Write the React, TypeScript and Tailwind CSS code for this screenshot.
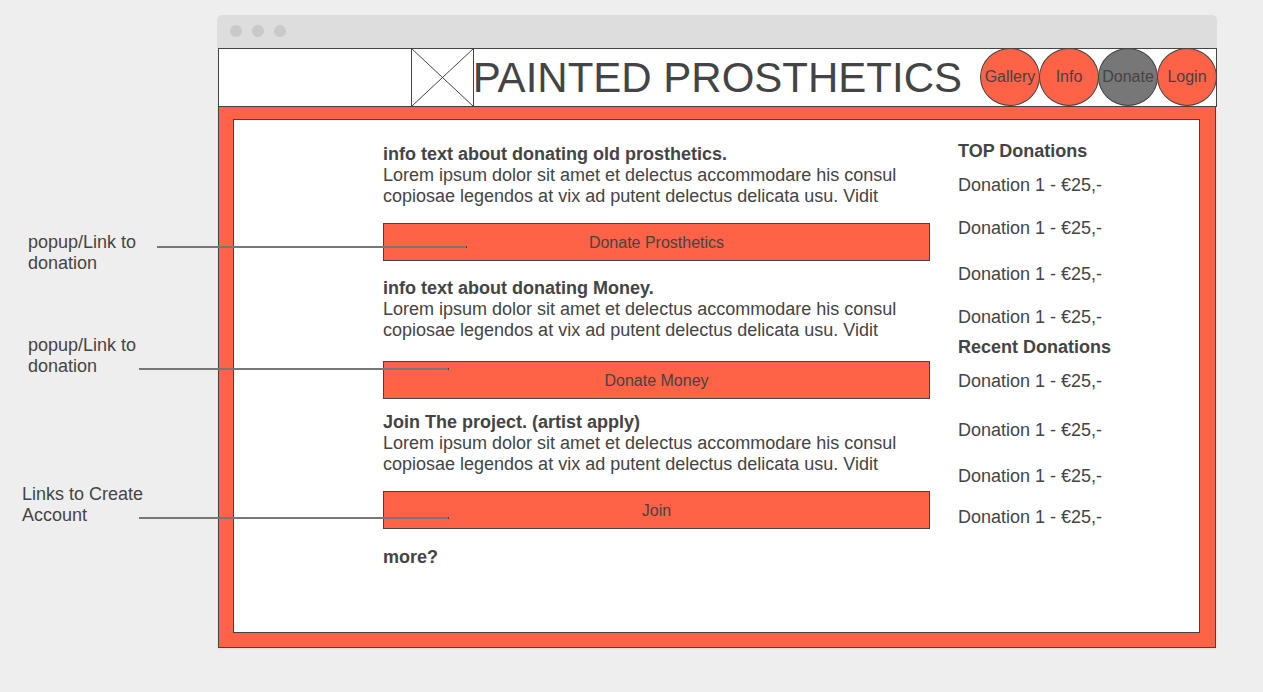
import React from "react";
import clsx from "clsx";

const LOREM =
  "Lorem ipsum dolor sit amet et delectus accommodare his consul copiosae legendos at vix ad putent delectus delicata usu. Vidit";

const notes = [
  { text: ["popup/Link to", "donation"], box: "pl-7", line: "left-[157px] top-3.5" },
  { text: ["popup/Link to", "donation"], box: "mt-[61px] pl-7", line: "left-[139px] top-[33px]" },
  { text: ["Links to Create", "Account"], box: "mt-[107px] pl-[22px]", line: "left-[139px] top-[33px]" },
];

const navItems = [
  { label: "Gallery", active: false },
  { label: "Info", active: false },
  { label: "Donate", active: true },
  { label: "Login", active: false },
];

const sections = [
  { title: "info text about donating old prosthetics.", action: "Donate Prosthetics", box: "", button: "mt-4" },
  { title: "info text about donating Money.", action: "Donate Money", box: "mt-[17px]", button: "mt-5" },
  { title: "Join The project. (artist apply)", action: "Join", box: "mt-[13px]", button: "mt-4" },
];

const donationLists = [
  { title: "TOP Donations", box: "", rows: ["mt-[13px]", "mt-[22px]", "mt-[25px]", "mt-[22px]"] },
  { title: "Recent Donations", box: "mt-[9px]", rows: ["mt-[13px]", "mt-7", "mt-[25px]", "mt-5"] },
];

function Notes() {
  return (
    <ul className="relative z-10 w-[217px] shrink-0 pt-[232px]">
      {notes.map((note, i) => (
        <li key={i} className={clsx("relative", note.box)}>
          {note.text.map((line) => (
            <span key={line} className="block whitespace-nowrap">
              {line}
            </span>
          ))}
          <span
            className={clsx(
              "pointer-events-none absolute h-0.5 w-[310px] border-r border-[#444] bg-[#777]",
              note.line,
            )}
          />
        </li>
      ))}
    </ul>
  );
}

function Header() {
  return (
    <header className="ml-px flex h-[59px] justify-end border border-[#444] bg-white">
      <svg
        className="-my-px h-[59px] w-[63px] shrink-0"
        viewBox="0 0 63 59"
        fill="none"
        stroke="#444"
        aria-hidden="true"
      >
        <rect x="0.5" y="0.5" width="62" height="58" />
        <path d="M0.5 0.5 62.5 58.5M62.5 0.5 0.5 58.5" />
      </svg>
      <h1 className="-ml-px whitespace-nowrap text-[42px] leading-[57px]">PAINTED PROSTHETICS</h1>
      <nav className="-my-px -mr-px ml-[19px] flex">
        {navItems.map((item) => (
          <a
            key={item.label}
            href="#"
            className={clsx(
              "-ml-px flex h-[58px] w-[60px] items-center justify-center rounded-[50%] border border-[#444] text-base",
              item.active ? "bg-[#777]" : "bg-[#ff6347]",
            )}
          >
            {item.label}
          </a>
        ))}
      </nav>
    </header>
  );
}

export default function App() {
  return (
    <div className="flex min-h-screen items-start bg-[#eee] font-['Liberation_Sans',Arial,sans-serif] text-lg leading-[21px] text-[#444]">
      <Notes />
      <div className="mb-11 mr-[46px] mt-[15px] min-w-0 flex-1">
        <div className="flex h-[33px] items-start gap-2.5 rounded-t-[5px] bg-[#ddd] pl-[13px] pt-2.5">
          <span className="size-3 rounded-full bg-[#c9c9c9]" />
          <span className="size-3 rounded-full bg-[#c9c9c9]" />
          <span className="size-3 rounded-full bg-[#c9c9c9]" />
        </div>
        <Header />
        <div className="mx-px border border-t-0 border-[#444] bg-[#ff6347] pb-3.5 pl-3.5 pr-[15px] pt-3 shadow-[0_1px_2px_rgba(0,0,0,0.08)]">
          <div className="flex border border-[#444] bg-white pb-16 pl-[149px]">
            <main className="min-w-0 flex-1 pt-6">
              {sections.map((s) => (
                <section key={s.title} className={s.box}>
                  <h2 className="font-bold">{s.title}</h2>
                  <p>{LOREM}</p>
                  <button
                    type="button"
                    className={clsx(
                      "block h-[38px] w-full border border-[#444] bg-[#ff6347] pt-px text-base",
                      s.button,
                    )}
                  >
                    {s.action}
                  </button>
                </section>
              ))}
              <h2 className="mt-[18px] font-bold">more?</h2>
            </main>
            <aside className="ml-7 w-[241px] shrink-0 pt-[21px]">
              {donationLists.map((list) => (
                <section key={list.title} className={list.box}>
                  <h2 className="font-bold">{list.title}</h2>
                  <ul>
                    {list.rows.map((gap, i) => (
                      <li key={i} className={gap}>
                        Donation 1 - €25,-
                      </li>
                    ))}
                  </ul>
                </section>
              ))}
            </aside>
          </div>
        </div>
      </div>
    </div>
  );
}
